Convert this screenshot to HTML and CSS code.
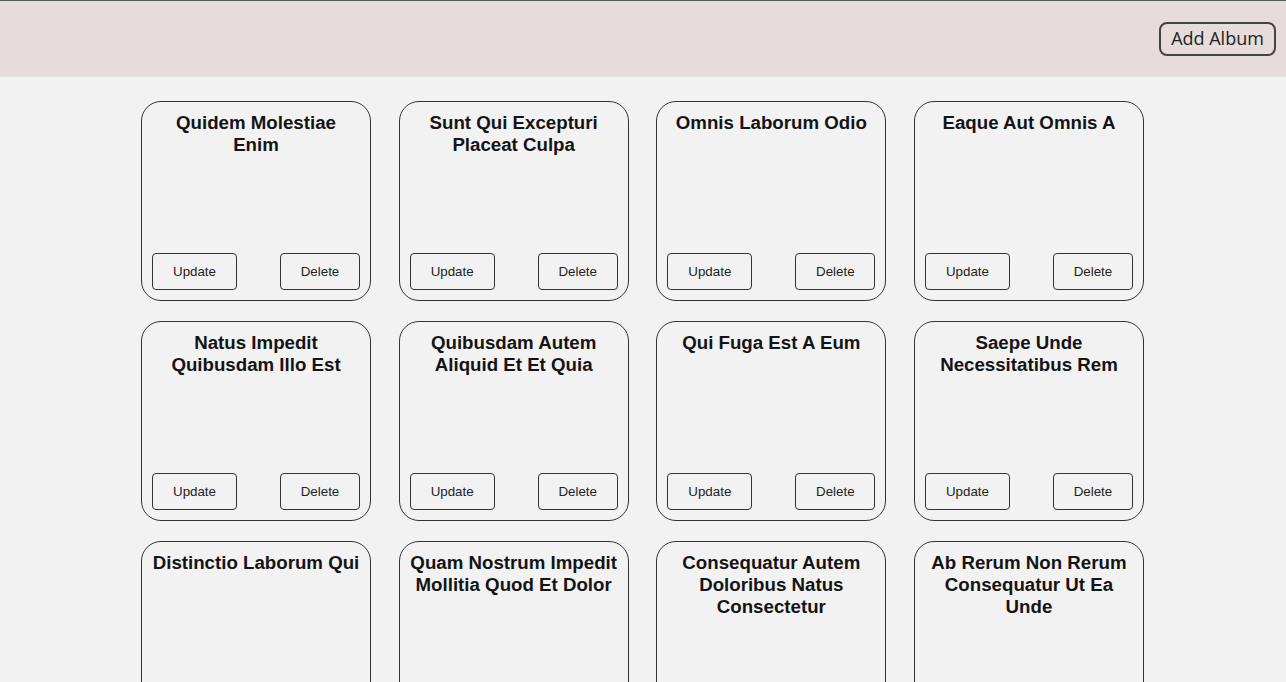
FILE: index.html
```html
<!DOCTYPE html>
<html>
<head>
<meta charset="utf-8">
<link rel="stylesheet" href="styles.css">
</head>
<body>
<header class="topbar">
  <button class="add-btn">Add Album</button>
</header>
<main class="grid">
  <div class="card"><h3 class="title">Quidem Molestiae Enim</h3><div class="actions"><button class="btn btn-update">Update</button><button class="btn btn-delete">Delete</button></div></div>
  <div class="card"><h3 class="title">Sunt Qui Excepturi Placeat Culpa</h3><div class="actions"><button class="btn btn-update">Update</button><button class="btn btn-delete">Delete</button></div></div>
  <div class="card"><h3 class="title">Omnis Laborum Odio</h3><div class="actions"><button class="btn btn-update">Update</button><button class="btn btn-delete">Delete</button></div></div>
  <div class="card"><h3 class="title">Eaque Aut Omnis A</h3><div class="actions"><button class="btn btn-update">Update</button><button class="btn btn-delete">Delete</button></div></div>
  <div class="card"><h3 class="title">Natus Impedit Quibusdam Illo Est</h3><div class="actions"><button class="btn btn-update">Update</button><button class="btn btn-delete">Delete</button></div></div>
  <div class="card"><h3 class="title">Quibusdam Autem Aliquid Et Et Quia</h3><div class="actions"><button class="btn btn-update">Update</button><button class="btn btn-delete">Delete</button></div></div>
  <div class="card"><h3 class="title">Qui Fuga Est A Eum</h3><div class="actions"><button class="btn btn-update">Update</button><button class="btn btn-delete">Delete</button></div></div>
  <div class="card"><h3 class="title">Saepe Unde Necessitatibus Rem</h3><div class="actions"><button class="btn btn-update">Update</button><button class="btn btn-delete">Delete</button></div></div>
  <div class="card"><h3 class="title">Distinctio Laborum Qui</h3><div class="actions"><button class="btn btn-update">Update</button><button class="btn btn-delete">Delete</button></div></div>
  <div class="card"><h3 class="title">Quam Nostrum Impedit Mollitia Quod Et Dolor</h3><div class="actions"><button class="btn btn-update">Update</button><button class="btn btn-delete">Delete</button></div></div>
  <div class="card"><h3 class="title">Consequatur Autem Doloribus Natus Consectetur</h3><div class="actions"><button class="btn btn-update">Update</button><button class="btn btn-delete">Delete</button></div></div>
  <div class="card"><h3 class="title">Ab Rerum Non Rerum Consequatur Ut Ea Unde</h3><div class="actions"><button class="btn btn-update">Update</button><button class="btn btn-delete">Delete</button></div></div>
</main>
</body>
</html>
```
FILE: styles.css
```css
* { box-sizing: border-box; }
html, body { margin: 0; padding: 0; }
body {
  background: #f2f2f2;
  font-family: "Liberation Sans", Arial, sans-serif;
  color: #111;
  border-top: 1px solid #5a5a5a;
}
.topbar {
  height: 76px;
  background: #e5dcdb;
  display: flex;
  align-items: center;
  justify-content: flex-end;
  padding-right: 10px;
}
.add-btn {
  height: 34px;
  width: 117px;
  padding: 0 0 3px;
  font-family: "Open Sans", "Noto Sans", sans-serif;
  font-size: 18px;
  color: #222;
  background: transparent;
  border: 2px solid #444;
  border-radius: 8px;
}
.grid {
  display: grid;
  grid-template-columns: repeat(4, 230px);
  column-gap: 27.67px;
  row-gap: 20px;
  justify-content: start;
  padding: 24px 0 0 141px;
}
.card {
  height: 200px;
  border: 1px solid #333;
  border-radius: 20px;
  display: flex;
  flex-direction: column;
  justify-content: space-between;
  padding: 10px 10px 10px;
}
.title {
  margin: 0;
  font-size: 18.7px;
  line-height: 22px;
  font-weight: bold;
  text-align: center;
  color: #141414;
}
.actions {
  display: flex;
  justify-content: space-between;
}
.btn {
  height: 37px;
  padding: 0;
  font-family: "Liberation Sans", Arial, sans-serif;
  font-size: 13.33px;
  color: #222;
  background: transparent;
  border: 1px solid #333;
  border-radius: 4px;
}
.btn-update { width: 85px; }
.btn-delete { width: 80px; }
```
